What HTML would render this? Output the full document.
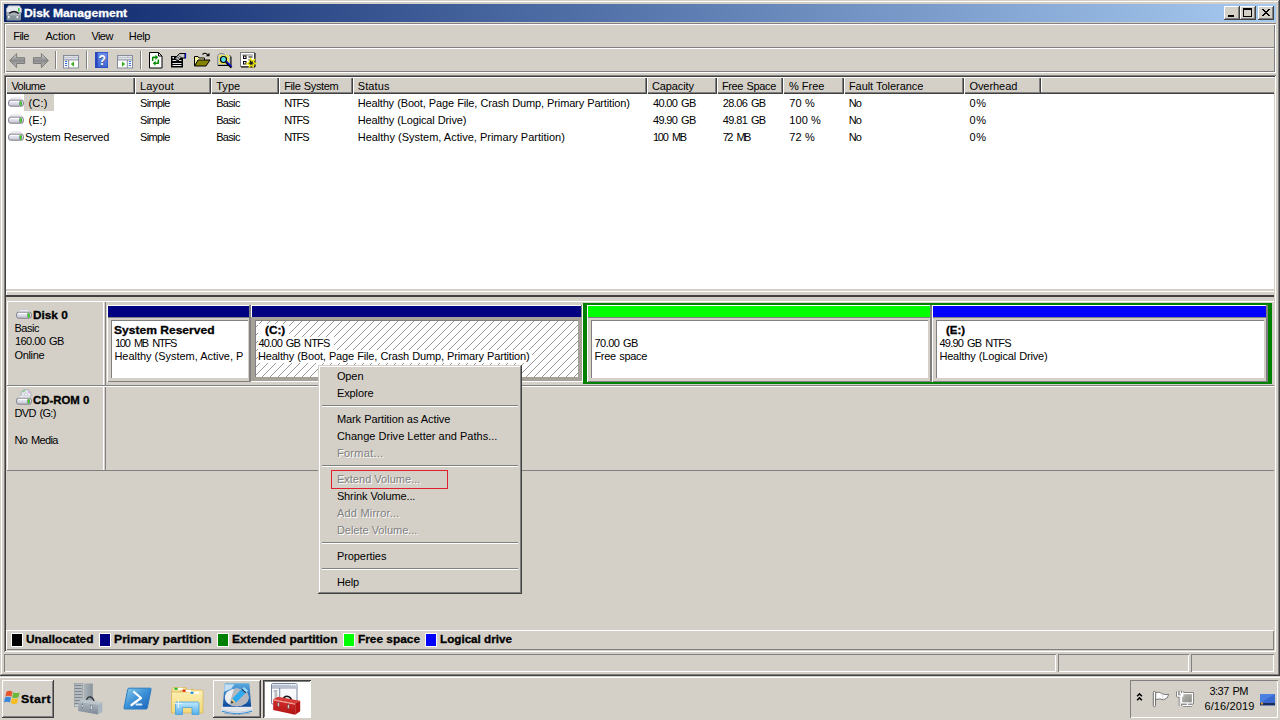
<!DOCTYPE html>
<html><head><meta charset="utf-8"><title>Disk Management</title>
<style>
*{box-sizing:border-box;margin:0;padding:0}
html,body{width:1280px;height:720px;overflow:hidden;background:#d4d0c8}
body{position:relative;font-family:"Liberation Sans",sans-serif;font-size:11px;line-height:13px;color:#000}
div,span,svg{position:absolute}
.t{white-space:pre;height:13px;transform-origin:0 0}
.b{font-weight:bold;-webkit-text-stroke:0.3px}
.d{color:#808080;text-shadow:1px 1px 0 #fff}
.win{left:0;top:0;width:1280px;height:676px;background:#d4d0c8;box-shadow:inset -1px -1px #404040,inset 1px 1px #d4d0c8,inset -2px -2px #808080,inset 2px 2px #fff}
.title{left:4px;top:4px;width:1272px;height:18px;background:linear-gradient(to right,#0a246a,#a6caf0)}
.btn{background:#d4d0c8;box-shadow:inset -1px -1px #404040,inset 1px 1px #fff,inset -2px -2px #808080,inset 2px 2px #d4d0c8}
.etch{left:4px;top:23px;width:1272px;height:50px;box-shadow:inset 1px 1px #808080,inset -1px -1px #fff,inset 2px 2px #fff,inset -2px -2px #808080}
.hl{height:1px;background:#808080}.wl{height:1px;background:#fff}
.vl{width:1px;background:#808080}.vw{width:1px;background:#fff}
.sunk2{box-shadow:inset 1px 1px #808080,inset -1px -1px #fff,inset 2px 2px #404040,inset -2px -2px #d4d0c8}
.sunk1{box-shadow:inset 1px 1px #808080,inset -1px -1px #fff}
.hc{top:77px;height:17px;background:#d4d0c8;box-shadow:inset 1px 1px #fff,inset -1px -1px #404040,inset -2px -2px #808080}
.pbox{background:#fff;box-shadow:inset 1px 1px #808080,inset -1px -1px #fff}
.lg{top:633px;width:12px;height:14px;border:1px solid #fff}
.menu{left:318px;top:365px;width:204px;height:229px;background:#d4d0c8;box-shadow:inset -1px -1px #404040,inset 1px 1px #d4d0c8,inset -2px -2px #808080,inset 2px 2px #fff}
.ms{left:322px;width:196px;height:2px;border-top:1px solid #808080;border-bottom:1px solid #fff}
</style></head><body>
<!-- ===== window ===== -->
<div class="win"></div>
<div class="title"></div>
<div class="btn" style="left:1224px;top:6px;width:16px;height:14px"></div>
<div class="btn" style="left:1240px;top:6px;width:16px;height:14px"></div>
<div class="btn" style="left:1258px;top:6px;width:16px;height:14px"></div>
<div style="left:1228px;top:15px;width:6px;height:2px;background:#000"></div>
<div style="left:1243px;top:8px;width:9px;height:9px;border:1px solid #000;border-top-width:2px"></div>
<svg style="left:1262px;top:9px" width="8" height="7" viewBox="0 0 8 7" shape-rendering="crispEdges"><path d="M0 0h2v1h1v1h2V1h1V0h2v1H7v1H6v1H5v1h1v1h1v1h1v1H6V6H5V5H3v1H2v1H0V6h1V5h1V4h1V3H2V2H1V1H0z" fill="#000"/></svg>
<div class="etch"></div>
<div class="hl" style="left:6px;top:47px;width:1268px"></div><div class="wl" style="left:6px;top:48px;width:1268px"></div>
<!-- toolbar separators -->
<div class="vl" style="left:55px;top:51px;height:18px"></div><div class="vw" style="left:56px;top:51px;height:18px"></div>
<div class="vl" style="left:86px;top:51px;height:18px"></div><div class="vw" style="left:87px;top:51px;height:18px"></div>
<div class="vl" style="left:140px;top:51px;height:18px"></div><div class="vw" style="left:141px;top:51px;height:18px"></div>
<!-- ===== list view ===== -->
<div class="sunk2" style="left:4px;top:75px;width:1272px;height:577px;background:#d4d0c8"></div>
<div style="left:6px;top:77px;width:1268px;height:212px;background:#fff"></div>
<div class="wl" style="left:6px;top:291px;width:1268px"></div>
<div style="left:6px;top:291px;width:1px;height:4px;background:#fff"></div>
<div style="left:6px;top:295px;width:1268px;height:2px;background:#404040"></div>
<div style="left:6px;top:77px;width:1268px;height:17px;background:#d4d0c8;box-shadow:inset 0 1px #fff,inset 0 -1px #404040,inset 0 -2px #808080"></div>
<div class="hc" style="left:6px;width:129px"></div>
<div class="hc" style="left:135px;width:76px"></div>
<div class="hc" style="left:211px;width:68px"></div>
<div class="hc" style="left:279px;width:74px"></div>
<div class="hc" style="left:353px;width:294px"></div>
<div class="hc" style="left:647px;width:70px"></div>
<div class="hc" style="left:717px;width:66px"></div>
<div class="hc" style="left:783px;width:61px"></div>
<div class="hc" style="left:844px;width:120px"></div>
<div class="hc" style="left:964px;width:77px"></div>
<div style="left:1041px;top:77px;width:1px;height:15px;background:#fff"></div>
<div style="left:24px;top:94px;width:30px;height:17px;background:#d4d0c8"></div>
<!-- ===== lower pane ===== -->
<!-- disk rows -->
<div class="wl" style="left:7px;top:301px;width:1267px"></div>
<div class="vw" style="left:7px;top:301px;height:169px"></div>
<div class="vw" style="left:103px;top:301px;height:169px"></div>
<div class="vl" style="left:105px;top:302px;height:168px"></div>
<div class="hl" style="left:7px;top:385px;width:1267px"></div>
<div class="wl" style="left:7px;top:386px;width:1267px"></div>
<div class="hl" style="left:7px;top:470px;width:1267px"></div>
<!-- partition: System Reserved -->
<div style="left:107px;top:305px;width:144px;height:77px;box-shadow:inset 1px 1px #fff,inset -1px -1px #808080"></div>
<div style="left:108px;top:306px;width:141px;height:11px;background:#000080"></div>
<div style="left:249px;top:305px;width:2px;height:77px;background:#808080"></div>
<div class="hl" style="left:108px;top:317px;width:141px"></div>
<div class="pbox" style="left:111px;top:320px;width:137px;height:58px"></div>
<!-- partition: C (selected) -->
<div style="left:251px;top:305px;width:1px;height:12px;background:#fff"></div>
<div style="left:251px;top:305px;width:330px;height:1px;background:#fff"></div>
<div style="left:252px;top:306px;width:329px;height:11px;background:#000080"></div>
<div style="left:581px;top:305px;width:1px;height:12px;background:#808080"></div>
<div style="left:251px;top:317px;width:331px;height:64px;background:#a5a198"></div>
<div id="hatch" style="left:255px;top:320px;width:323px;height:57px;background-color:#fff;box-shadow:inset 1px 1px #808080"></div>
<div style="left:582px;top:305px;width:1px;height:77px;background:#fff"></div>
<div class="wl" style="left:251px;top:381px;width:332px"></div>
<!-- extended frame -->
<div style="left:583px;top:303px;width:689px;height:81px;border:solid #008000;border-width:2px 4px 2px 4px"></div>
<!-- partition: free -->
<div style="left:587px;top:305px;width:345px;height:77px;box-shadow:inset 1px 1px #fff,inset 0 -1px #808080"></div>
<div style="left:588px;top:306px;width:342px;height:11px;background:#00ff00"></div>
<div style="left:930px;top:305px;width:2px;height:77px;background:#808080"></div>
<div class="hl" style="left:588px;top:317px;width:342px"></div>
<div class="pbox" style="left:591px;top:320px;width:337px;height:58px"></div>
<!-- partition: E -->
<div style="left:932px;top:305px;width:336px;height:77px;box-shadow:inset 1px 1px #fff,inset 0 -1px #808080"></div>
<div style="left:933px;top:306px;width:333px;height:11px;background:#0000ff"></div>
<div style="left:1266px;top:305px;width:2px;height:77px;background:#808080"></div>
<div class="hl" style="left:933px;top:317px;width:333px"></div>
<div class="pbox" style="left:936px;top:320px;width:328px;height:58px"></div>
<!-- legend -->
<div style="left:6px;top:630px;width:1268px;height:20px;box-shadow:inset 1px 1px #fff,inset -1px -1px #808080"></div>
<div class="lg" style="left:11px;background:#000"></div>
<div class="lg" style="left:99px;background:#000080"></div>
<div class="lg" style="left:217px;background:#008000"></div>
<div class="lg" style="left:343px;background:#00ff00"></div>
<div class="lg" style="left:425px;background:#0000ff"></div>
<!-- status bar -->
<div class="sunk1" style="left:4px;top:654px;width:1052px;height:18px"></div>
<div class="sunk1" style="left:1058px;top:654px;width:131px;height:18px"></div>
<div class="sunk1" style="left:1191px;top:654px;width:83px;height:18px"></div>
<svg width="0" height="0" style="left:0;top:0"><defs>
<linearGradient id="gArrow" x1="0" y1="0" x2="0" y2="1"><stop offset="0" stop-color="#dadada"/><stop offset="0.5" stop-color="#8a8a8a"/><stop offset="1" stop-color="#c4c4c4"/></linearGradient>
<linearGradient id="gDrive" x1="0" y1="0" x2="0" y2="1"><stop offset="0" stop-color="#f6f6fa"/><stop offset="0.5" stop-color="#dcdcea"/><stop offset="1" stop-color="#c4c4d0"/></linearGradient>
<linearGradient id="gHelp" x1="0" y1="0" x2="0" y2="1"><stop offset="0" stop-color="#6a8cea"/><stop offset="1" stop-color="#3e66d4"/></linearGradient>
<pattern id="hat" width="8" height="8" patternUnits="userSpaceOnUse"><path d="M5 0h1v1H5zM4 1h1v1H4zM3 2h1v1H3zM2 3h1v1H2zM1 4h1v1H1zM0 5h1v1H0zM7 6h1v1H7zM6 7h1v1H6z" fill="#989898" shape-rendering="crispEdges"/></pattern>

</defs></svg>
<!-- title icon -->
<svg style="left:6px;top:5px" width="16" height="16" viewBox="0 0 16 16">
<path d="M2.5 .8h11l2 3v3.6h-15V3.8z" fill="#e9ebf2" stroke="#a8acb8" stroke-width=".8"/>
<rect x="12" y="3.2" width="1.6" height="3.2" fill="#35c435"/>
<rect x=".5" y="8" width="14.5" height="7.6" rx="1" fill="#87939a"/>
<rect x=".5" y="8" width="14.5" height="2.4" fill="#a8b2b8"/>
<path d="M3.2 8.4Q8 4.6 12.6 8.4" stroke="#1a1a1a" stroke-width="1.3" fill="none"/>
<rect x="2" y="11" width="1.6" height="2.2" fill="#f0f0f0"/><rect x="10.6" y="11" width="1.6" height="2.2" fill="#f0f0f0"/>
</svg>
<!-- back / forward -->
<svg style="left:9px;top:53px" width="17" height="16" viewBox="0 0 17 16"><path d="M.6 7.5L7.6.6v4.1h8v5.8h-8v4.1z" fill="url(#gArrow)" stroke="#7c7c7c" stroke-width="1" stroke-linejoin="round"/></svg>
<svg style="left:32px;top:53px" width="17" height="16" viewBox="0 0 17 16"><path d="M16.4 7.5L9.4.6v4.1h-8v5.8h8v4.1z" fill="url(#gArrow)" stroke="#7c7c7c" stroke-width="1" stroke-linejoin="round"/></svg>
<!-- show/hide tree -->
<svg style="left:63px;top:55px" width="16" height="14" viewBox="0 0 16 14"><rect x=".5" y=".5" width="15" height="12.500" fill="#fff" stroke="#858c9c"/><rect x="1" y="1" width="14" height="4" fill="#b9bdc9"/><path d="M1.500 1.700h9" stroke="#f4f4f8" stroke-width=".9"/><path d="M1 3.700h14" stroke="#eceef4" stroke-width=".9"/><path d="M1 5h14" stroke="#858c9c" stroke-width=".8"/><rect x="11.500" y="1.100" width="1.200" height="1.200" fill="#fff"/><rect x="13.500" y="1.100" width="1.200" height="1.200" fill="#fff"/><path d="M5.700 5v8" stroke="#858c9c"/><path d="M2 6.500h2.200M2 8.500h2.200M2 10.500h2.200" stroke="#2f6fe0" stroke-width="1"/><path d="M11 6.500v5.200L7.800 9.100z" fill="#3cb21e"/></svg>
<!-- help -->
<svg style="left:95px;top:52px" width="13" height="16" viewBox="0 0 13 16"><rect width="13" height="16" fill="#2a48be"/><rect x="2.800" y=".8" width="9.700" height="14.400" fill="url(#gHelp)"/><text x="7.700" y="14" text-anchor="middle" font-family="Liberation Sans,sans-serif" font-size="15" font-weight="bold" fill="#5a6890" transform="translate(1.500,0) scale(.8,1)">?</text><text x="7.200" y="13.500" text-anchor="middle" font-family="Liberation Sans,sans-serif" font-size="15" font-weight="bold" fill="#fff" transform="translate(1.500,0) scale(.8,1)">?</text></svg>
<!-- action pane -->
<svg style="left:117px;top:55px" width="16" height="14" viewBox="0 0 16 14"><rect x=".5" y=".5" width="15" height="12.500" fill="#fff" stroke="#858c9c"/><rect x="1" y="1" width="14" height="4" fill="#b9bdc9"/><path d="M1.500 1.700h9" stroke="#f4f4f8" stroke-width=".9"/><path d="M1 3.700h14" stroke="#eceef4" stroke-width=".9"/><path d="M1 5h14" stroke="#858c9c" stroke-width=".8"/><rect x="11.500" y="1.100" width="1.200" height="1.200" fill="#fff"/><rect x="13.500" y="1.100" width="1.200" height="1.200" fill="#fff"/><path d="M10.300 5v8" stroke="#858c9c"/><path d="M11.800 6.500h2.200M11.800 8.500h2.200M11.800 10.500h2.200" stroke="#2f6fe0" stroke-width="1"/><path d="M5 6.500v5.200l3.200-2.600z" fill="#3cb21e"/></svg>
<!-- refresh -->
<svg style="left:149px;top:52px" width="14" height="17" viewBox="0 0 14 17"><path d="M.5.5h9l3.500 3.500v12h-12.500z" fill="#fff" stroke="#000"/><path d="M9.500 .5v3.500h3.500" fill="none" stroke="#000"/><path d="M9.200 5.300L6.500 2.800v1.700H4.200q-1.300 0-1.300 1.300V9h1.500V6.200h2.100v1.700zM3.800 11.300l2.700 2.500v-1.700h2.300q1.300 0 1.300-1.300V7.600H8.600v2.800H6.500V8.700z" fill="#008a00"/></svg>
<!-- properties -->
<svg style="left:171px;top:52px" width="16" height="16" viewBox="0 0 16 16"><rect x="0" y="4" width="12" height="11.500" fill="#000"/><rect x="1.500" y="5" width="1.500" height="1.500" fill="#fff"/><path d="M1.500 8.500h9M1.500 11.500h9M1.500 13.500h9" stroke="#e8e8e8" stroke-width="1"/><path d="M3.500 7L8.500 1.500h5.500v4.500h-4L7 9z" fill="#c8c8c8" stroke="#000" stroke-width="1"/><path d="M5 6.500l3 3M6.500 5l3 3M8 3.500l2.500 2.500" stroke="#000" stroke-width=".8"/><path d="M14.500 1v5.500" stroke="#0000c0" stroke-width="1.200"/></svg>
<!-- open folder -->
<svg style="left:194px;top:52px" width="17" height="15" viewBox="0 0 17 15"><path d="M.5 14V4.500h3.500l1 1.500h5.500v2" fill="#f8f4a0" stroke="#000"/><path d="M.500 14l3.500-6h12l-4 6z" fill="#848200" stroke="#000"/><path d="M8.500 2.500q3-3 5.500 1" fill="none" stroke="#000" stroke-width="1.100"/><path d="M11.800 4.200h3.700V.8z" fill="#000"/></svg>
<!-- find -->
<svg style="left:217px;top:53px" width="16" height="16" viewBox="0 0 16 16"><pattern id="dth" width="2" height="2" patternUnits="userSpaceOnUse"><rect width="2" height="2" fill="#c4c4c0"/><rect width="1" height="1" fill="#ffff00"/><rect x="1" y="1" width="1" height="1" fill="#ffff00"/></pattern><path d="M.5 2.500L2.500.5h4l1.500 2h5.500v9.500h-13z" fill="#c4c4c0" stroke="#909090"/><rect x="2" y="2" width="10" height="9" fill="url(#dth)"/><path d="M1 12.500h13v-9" fill="none" stroke="#000"/><circle cx="6.500" cy="6.500" r="3" fill="#58e4ec" stroke="#000" stroke-width="1.200"/><path d="M9 9l5.500 5.500" stroke="#000" stroke-width="2.400"/><path d="M9.500 8.500l5 5" stroke="#0000f0" stroke-width="1.300"/></svg>
<!-- settings -->
<svg style="left:240px;top:52px" width="17" height="16" viewBox="0 0 17 16"><rect x=".5" y=".5" width="14" height="14" fill="#fff" stroke="#808080"/><path d="M1 15h14V1" fill="none" stroke="#000"/><rect x="2" y="2" width="11" height="2" fill="#c0c0c0"/><rect x="3" y="3.500" width="3.500" height="3.500" fill="#000"/><rect x="4" y="4.500" width="1.500" height="1.500" fill="#fff"/><rect x="3" y="9" width="3.500" height="3.500" fill="#000"/><rect x="4" y="10" width="1.500" height="1.500" fill="#fff"/><path d="M8.500 5h4M8.500 8h2" stroke="#000" stroke-width="1.200"/><path d="M10.700 6.500l1.200 2.500 2.600-1.400-1.200 2.600 2.600 1.400-2.900.5.400 2.800-2.300-1.900-1.900 2.200.2-2.900-2.900-.4 2.500-1.500z" fill="#202020" stroke="#f4ec00" stroke-width="1.100"/></svg>
<!-- list drive icons -->
<svg style="left:8px;top:97px" width="16" height="11" viewBox="0 0 16 11"><path d="M4 .9h8.200l2.600 2.400H1.200z" fill="#f1f1f5" stroke="#c9c9d2" stroke-width=".6"/><rect x=".6" y="3.200" width="14.800" height="6" rx="2" fill="url(#gDrive)" stroke="#7e7e88" stroke-width="1"/><path d="M2.500 4.400h9" stroke="#fff" stroke-width="1"/><rect x="11.300" y="4.200" width="2.600" height="4.200" rx=".8" fill="#6c6484"/><rect x="11.800" y="4.200" width="1.600" height="4.200" fill="#3fe01c"/></svg>
<svg style="left:8px;top:114px" width="16" height="11" viewBox="0 0 16 11"><path d="M4 .9h8.200l2.600 2.400H1.200z" fill="#f1f1f5" stroke="#c9c9d2" stroke-width=".6"/><rect x=".6" y="3.200" width="14.800" height="6" rx="2" fill="url(#gDrive)" stroke="#7e7e88" stroke-width="1"/><path d="M2.500 4.400h9" stroke="#fff" stroke-width="1"/><rect x="11.300" y="4.200" width="2.600" height="4.200" rx=".8" fill="#6c6484"/><rect x="11.800" y="4.200" width="1.600" height="4.200" fill="#3fe01c"/></svg>
<svg style="left:8px;top:131px" width="16" height="11" viewBox="0 0 16 11"><path d="M4 .9h8.200l2.600 2.400H1.200z" fill="#f1f1f5" stroke="#c9c9d2" stroke-width=".6"/><rect x=".6" y="3.200" width="14.800" height="6" rx="2" fill="url(#gDrive)" stroke="#7e7e88" stroke-width="1"/><path d="M2.500 4.400h9" stroke="#fff" stroke-width="1"/><rect x="11.300" y="4.200" width="2.600" height="4.200" rx=".8" fill="#6c6484"/><rect x="11.800" y="4.200" width="1.600" height="4.200" fill="#3fe01c"/></svg>
<!-- disk 0 icon -->
<svg style="left:16px;top:309px" width="16" height="11" viewBox="0 0 16 11"><path d="M4 .9h8.200l2.600 2.400H1.200z" fill="#f1f1f5" stroke="#c9c9d2" stroke-width=".6"/><rect x=".6" y="3.200" width="14.800" height="6" rx="2" fill="url(#gDrive)" stroke="#7e7e88" stroke-width="1"/><path d="M2.500 4.400h9" stroke="#fff" stroke-width="1"/><rect x="11.300" y="4.200" width="2.600" height="4.200" rx=".8" fill="#6c6484"/><rect x="11.800" y="4.200" width="1.600" height="4.200" fill="#3fe01c"/></svg>
<!-- cd-rom icon -->
<svg style="left:16px;top:389px" width="17" height="17" viewBox="0 0 17 17"><circle cx="10" cy="5.500" r="5" fill="#e4e8ee" stroke="#a0a6b0" stroke-width=".8"/><circle cx="10" cy="5.500" r="1.500" fill="#fff" stroke="#a0a6b0" stroke-width=".6"/><path d="M7 3l2-1.500" stroke="#6ad06a" stroke-width="1.200"/><path d="M12.500 2.500l1 1.500" stroke="#e070e0" stroke-width="1"/><g transform="translate(0,6)"><path d="M4 .9h8.200l2.600 2.400H1.200z" fill="#f1f1f5" stroke="#c9c9d2" stroke-width=".6"/><rect x=".6" y="3.200" width="14.800" height="6" rx="2" fill="url(#gDrive)" stroke="#7e7e88" stroke-width="1"/><path d="M2.500 4.400h9" stroke="#fff" stroke-width="1"/><rect x="11.300" y="4.200" width="2.600" height="4.200" rx=".8" fill="#6c6484"/><rect x="11.800" y="4.200" width="1.600" height="4.200" fill="#3fe01c"/></g></svg>
<!-- hatch -->
<svg style="left:256px;top:321px" width="322" height="56"><rect width="322" height="56" fill="url(#hat)"/></svg>

<div style="left:258px;top:324px;width:31px;height:13px;background:#fff"></div>
<div style="left:258px;top:337px;width:76px;height:13px;background:#fff"></div>
<div style="left:258px;top:350px;width:274px;height:13px;background:#fff"></div>
<!-- ===== context menu ===== -->
<div class="menu"></div>
<div class="ms" style="top:405px"></div>
<div class="ms" style="top:465px"></div>
<div class="ms" style="top:542px"></div>
<div class="ms" style="top:568px"></div>
<div style="left:331px;top:470px;width:117px;height:19px;border:1px solid #e0202c"></div>
<!-- ===== taskbar ===== -->
<div style="left:0;top:676px;width:1280px;height:44px;background:#d4d0c8"></div>
<div class="wl" style="left:0;top:677px;width:1280px"></div>
<div class="btn" style="left:2px;top:680px;width:52px;height:38px"></div>
<div class="btn" style="left:213px;top:680px;width:48px;height:38px"></div>
<div style="left:263px;top:680px;width:48px;height:38px;background:#fff;box-shadow:inset 1px 1px #404040,inset -1px -1px #fff,inset 2px 2px #808080"></div>
<div class="sunk1" style="left:1130px;top:680px;width:148px;height:38px"></div>
<svg width="0" height="0" style="left:0;top:0"><defs>
<linearGradient id="gSrv" x1="0" y1="0" x2="1" y2="0"><stop offset="0" stop-color="#aeb6bc"/><stop offset="1" stop-color="#8a949c"/></linearGradient>
<linearGradient id="gBox" x1="0" y1="0" x2="0" y2="1"><stop offset="0" stop-color="#b0bac2"/><stop offset="1" stop-color="#7d8a96"/></linearGradient>
<linearGradient id="gPS" x1="0" y1="0" x2="1" y2="1"><stop offset="0" stop-color="#8ed0ee"/><stop offset="0.5" stop-color="#3a8fd6"/><stop offset="1" stop-color="#1c62b8"/></linearGradient>
<linearGradient id="gFold" x1="0" y1="0" x2="0" y2="1"><stop offset="0" stop-color="#fdf0b4"/><stop offset="1" stop-color="#f2d878"/></linearGradient>
<linearGradient id="gStand" x1="0" y1="0" x2="0" y2="1"><stop offset="0" stop-color="#bfe8fb"/><stop offset="1" stop-color="#56aeea"/></linearGradient>
<linearGradient id="gPW" x1="0" y1="0" x2="0" y2="1"><stop offset="0" stop-color="#5aa8e0"/><stop offset="1" stop-color="#0c4a9c"/></linearGradient>
<linearGradient id="gRed" x1="0" y1="0" x2="0" y2="1"><stop offset="0" stop-color="#d63030"/><stop offset="1" stop-color="#b01414"/></linearGradient>
<linearGradient id="gScr" x1="0" y1="0" x2="1" y2="1"><stop offset="0" stop-color="#b8b8b2"/><stop offset="1" stop-color="#8c8c86"/></linearGradient>
</defs></svg>
<!-- start flag -->
<svg style="left:4px;top:690px" width="17" height="16" viewBox="0 0 17 16">
<path d="M2.500 1.500Q5.500 -.3 8.500 1.700L7.300 6.700Q4.500 5 1.300 6.700z" fill="#e8542c"/>
<path d="M9.300 2.200Q12.500 4 15.800 2.200L14.500 7.300Q11.300 9 8.100 7.200z" fill="#6cb83a"/>
<path d="M1.100 7.600Q4.200 5.900 7.100 7.600L5.900 12.600Q3 11 -.1 12.600z" fill="#3a86d8"/>
<path d="M7.900 8.100Q11 9.900 14.300 8.200L13.100 13.200Q9.900 15 6.700 13.100z" fill="#f6be20"/>
</svg>
<!-- server manager -->
<svg style="left:74px;top:683px" width="29" height="32" viewBox="0 0 29 32">
<rect x=".3" y=".3" width="8" height="23.500" fill="#c9cfd3" stroke="#8a929a" stroke-width=".6"/>
<path d="M.8 2.500h7M.8 5.500h7M.8 8.500h7M.8 11.500h7M.8 14.500h7M.8 17.500h7M.8 20.500h7" stroke="#7c858c" stroke-width="1.300"/>
<rect x="9.500" y=".5" width="9.300" height="17" fill="url(#gSrv)"/>
<path d="M12.200 18Q13.500 13.200 16.500 14T20.300 19.500" fill="none" stroke="#2c3438" stroke-width="1.300"/>
<path d="M4.300 18.500l19.700 3v10l-19.700-3.500z" fill="url(#gBox)"/>
<path d="M24 21.500l4.300-2.300v9.800l-4.300 2.500z" fill="#a9b5c0"/>
<path d="M4.300 18.500l4-2.300 20 3-4.300 2.300z" fill="#bcc5cc"/>
<rect x="8" y="21" width="1.600" height="3.800" fill="#e8ecee" stroke="#5a646c" stroke-width=".4"/><rect x="16.500" y="22.500" width="1.600" height="3.800" fill="#e8ecee" stroke="#5a646c" stroke-width=".4"/>
</svg>
<!-- powershell -->
<svg style="left:122px;top:687px" width="30" height="24" viewBox="0 0 30 24">
<path d="M7 1.200h21.300q1 0 .8 1L25.300 21q-.2 1-1.200 1H2.800q-1 0-.8-1L5.800 2.200q.2-1 1.200-1z" fill="url(#gPS)" stroke="#2a7cc0" stroke-width="1"/>
<path d="M12 5l7 6-9.500 7" fill="none" stroke="#fff" stroke-width="2.200" stroke-linejoin="round" stroke-linecap="round"/>
<path d="M14.500 17.500h5" stroke="#d8ecf8" stroke-width="1.800" stroke-linecap="round"/>
</svg>
<!-- explorer -->
<svg style="left:171px;top:686px" width="33" height="30" viewBox="0 0 33 30">
<path d="M2 1.500h13l1 2v3H1V2.500z" fill="#f6e096" stroke="#d8b658" stroke-width=".7"/>
<path d="M10 3.500h13l1 2v3H9z" fill="#f6e096" stroke="#d8b658" stroke-width=".7"/>
<path d="M.5 6h17l1.500-2h12l1 1.500V27H.5z" fill="url(#gFold)" stroke="#d8b658" stroke-width=".8"/>
<rect x="3.500" y="1.800" width="3" height="2" fill="#18c030"/><rect x="7" y="1.800" width="5" height="2" fill="#fff"/>
<rect x="11.500" y="3.800" width="3" height="2" fill="#e02818"/><rect x="15" y="3.800" width="5" height="2" fill="#fff"/>
<rect x="19.500" y="5.800" width="3" height="2" fill="#1890e8"/><rect x="23" y="5.800" width="5" height="2" fill="#fff"/>
<path d="M4.500 17.500q0-1.500 1.500-1.500h20.500q1.500 0 1.500 1.500V28.500h-7V21.500h-9.500v7h-7z" fill="url(#gStand)" stroke="#469fdf" stroke-width=".8"/>
<path d="M7.500 13v9M3.500 17.500h8" stroke="#fff" stroke-width=".8" opacity=".9"/>
</svg>
<!-- partition tool -->
<svg style="left:221px;top:683px" width="32" height="32" viewBox="0 0 32 32">
<path d="M.3 25q0-2 2-2.500h27.400q2 .5 2 2.500v2.500q-2 4.200-15.700 4.200T.3 27.500z" fill="#e4e7eb"/>
<path d="M3.500 1.500q0-1.200 1.200-1.200h22.600q1.200 0 1.200 1.200L30.200 23.700H1.800z" fill="url(#gPW)"/>
<path d="M3.800 1.200h9.500l-3 4.500-7.200 3z" fill="#c4def2"/>
<ellipse cx="15.700" cy="14.400" rx="11.800" ry="8.900" fill="#eceef2"/>
<clipPath id="cpD"><ellipse cx="15.700" cy="14.400" rx="11.800" ry="8.900"/></clipPath><path d="M13.500 4L32 4V26H7z" fill="#b4b7be" clip-path="url(#cpD)"/>
<path d="M9.800 20.300l1.600-4.800L20.200 6.600l4.200 3.600-9.500 9.500z" fill="#2caaf0"/>
<path d="M20.200 6.600l1-1 4.200 3.600-1 1z" fill="#1c3c64"/>
<path d="M21.200 5.600l1.600-1.700 4.300 3.600-1.700 1.700z" fill="#9adcfa"/>
<path d="M9.800 20.300l1.600-4.800 3.500 4.200z" fill="#ecc878"/><path d="M9.800 20.300l.9-2.700 2 2.300z" fill="#2c3440"/>
<path d="M.8 26.800q15.200 4.600 30.400 0" fill="none" stroke="#c2c8d0" stroke-width=".8"/>
<path d="M1 28.300q15 4.800 30 0" fill="none" stroke="#2e90dc" stroke-width="1.100"/>
<path d="M3 30.300q13 3 26 0" fill="none" stroke="#9aa2ac" stroke-width=".9"/>
</svg>
<!-- mmc toolbox -->
<svg style="left:270px;top:682px" width="34" height="34" viewBox="0 0 34 34">
<rect x="1.500" y="1.500" width="25.500" height="20.500" rx="1.200" fill="#f7f9fb" stroke="#76849e" stroke-width="1"/>
<rect x="2" y="2" width="24.500" height="4" fill="#e3e8f0"/><path d="M2 4h24.500M2 6h24.500" stroke="#76849e" stroke-width=".8"/>
<rect x="20.800" y="2.300" width="1.200" height="1.200" fill="#fff"/><rect x="22.900" y="2.300" width="1.200" height="1.200" fill="#fff"/><rect x="25" y="2.300" width="1.200" height="1.200" fill="#fff"/>
<path d="M9.700 6v16" stroke="#76849e" stroke-width="1"/>
<path d="M3.500 9h4M4.500 11h2.500M4.500 13h3M4.500 15h2" stroke="#606870" stroke-width=".8"/>
<path d="M13 17.500Q14.500 13.500 18 14.500T22 20" fill="none" stroke="#181818" stroke-width="1.600"/>
<path d="M3.200 17.200l22 4.300v11.200l-22-4.700z" fill="url(#gRed)"/>
<path d="M25.200 21.500l5-2.700v10.500l-5 3.400z" fill="#b41414"/>
<path d="M3.200 17.200l4.500-2.500 22.500 4.100-5 2.700z" fill="#d63a34"/>
<path d="M3.500 18l21.500 4.200" stroke="#f4b0a0" stroke-width="1"/>
<rect x="7.500" y="20.500" width="1.800" height="4" fill="#cdd2d6" stroke="#6a2020" stroke-width=".4"/><rect x="17.500" y="22.500" width="1.800" height="4" fill="#cdd2d6" stroke="#6a2020" stroke-width=".4"/>
</svg>
<!-- tray chevron -->
<svg style="left:1136px;top:692px" width="8" height="10" viewBox="0 0 8 10"><path d="M1.100 4.300L3.500 1.900 5.900 4.300M1.100 8.300L3.500 5.900 5.900 8.300" fill="none" stroke="#000" stroke-width="1.500"/></svg>
<!-- tray flag -->
<svg style="left:1152px;top:690px" width="19" height="18" viewBox="0 0 19 18"><rect x="1.300" y="1.400" width="2.200" height="15.300" rx="1" fill="#fff" stroke="#707070" stroke-width="1"/><path d="M3.700 2.600Q7 1.400 9.500 3.300T16.800 4.300Q16 8.800 11.800 9.800 8 8.300 3.700 9.500z" fill="#fcfcfc" stroke="#787878" stroke-width="1"/><path d="M9.500 3.300Q10.300 6.500 11.800 9.800" stroke="#c4c4c4" stroke-width=".7" fill="none"/></svg>
<!-- tray network -->
<svg style="left:1176px;top:690px" width="18" height="17" viewBox="0 0 18 17"><g fill="none" stroke="#6c6c6c" stroke-width="2.900" stroke-linejoin="round"><rect x="5.500" y="3.500" width="11" height="9.500"/><path d="M7 15.500h9M11.500 13v2.500M1.700 1.500v4.500h5V1.500M4.200 .8v4M4.200 6v10"/></g><rect x="5.500" y="3.500" width="11" height="9.500" fill="url(#gScr)" stroke="#fff" stroke-width="1.300"/><path d="M7 15.500h9M11.500 13v2.500" stroke="#fff" stroke-width="1.300"/><path d="M1.700 1.500v4.500h5V1.500M4.200 .8v4" fill="none" stroke="#fff" stroke-width="1.300"/><path d="M4.200 6v10" stroke="#fff" stroke-width="1.300"/></svg>
<!-- show desktop -->
<svg style="left:1260px;top:694px" width="15" height="12" viewBox="0 0 15 12"><rect width="15" height="12" fill="#3a6ad0"/><path d="M0 0h15L0 9z" fill="#4c80e0"/><rect y="9" width="15" height="2.200" fill="#1c2c58"/><rect x="1" y="8.500" width="2" height="2" fill="#e8a030"/><rect y="11.200" width="15" height=".8" fill="#8090b0"/></svg>

<span class="t b" style="left:23.8px;top:6.7px;transform:scaleX(1.1023);color:#fff">Disk Management</span>
<span class="t" style="left:13.2px;top:29.7px;letter-spacing:-0.511px">File</span>
<span class="t" style="left:45.4px;top:29.7px;letter-spacing:-0.116px">Action</span>
<span class="t" style="left:91.4px;top:29.7px;letter-spacing:-0.552px">View</span>
<span class="t" style="left:128.8px;top:29.7px;letter-spacing:-0.342px">Help</span>
<span class="t" style="left:11.4px;top:79.7px;letter-spacing:-0.501px">Volume</span>
<span class="t" style="left:140.1px;top:79.7px;letter-spacing:0.114px">Layout</span>
<span class="t" style="left:216.2px;top:79.7px;letter-spacing:0.047px">Type</span>
<span class="t" style="left:284.2px;top:79.7px;letter-spacing:-0.384px;word-spacing:0.767px">File System</span>
<span class="t" style="left:357.7px;top:79.7px;letter-spacing:0.142px">Status</span>
<span class="t" style="left:651.9px;top:79.7px;letter-spacing:-0.085px">Capacity</span>
<span class="t" style="left:721.9px;top:79.7px;letter-spacing:-0.339px;word-spacing:0.679px">Free Space</span>
<span class="t" style="left:788.9px;top:79.7px;letter-spacing:0.006px">% Free</span>
<span class="t" style="left:848.9px;top:79.7px;letter-spacing:-0.043px;word-spacing:0.086px">Fault Tolerance</span>
<span class="t" style="left:969.4px;top:79.7px;letter-spacing:-0.045px">Overhead</span>
<span class="t" style="left:28.4px;top:96.7px;letter-spacing:0.224px">(C:)</span>
<span class="t" style="left:140.1px;top:96.7px;letter-spacing:-0.685px">Simple</span>
<span class="t" style="left:216.2px;top:96.7px;letter-spacing:-0.677px">Basic</span>
<span class="t" style="left:284.2px;top:96.7px;letter-spacing:-1.145px">NTFS</span>
<span class="t" style="left:357.7px;top:96.7px;letter-spacing:-0.145px;word-spacing:0.291px">Healthy (Boot, Page File, Crash Dump, Primary Partition)</span>
<span class="t" style="left:652.9px;top:96.7px;letter-spacing:-0.617px;word-spacing:1.234px">40.00 GB</span>
<span class="t" style="left:722.8px;top:96.7px;letter-spacing:-0.617px;word-spacing:1.234px">28.06 GB</span>
<span class="t" style="left:789.3px;top:96.7px;letter-spacing:0.174px">70 %</span>
<span class="t" style="left:848.8px;top:96.7px;letter-spacing:-0.962px">No</span>
<span class="t" style="left:969.4px;top:96.7px;letter-spacing:0.694px">0%</span>
<span class="t" style="left:28.4px;top:113.7px;letter-spacing:0.089px">(E:)</span>
<span class="t" style="left:140.1px;top:113.7px;letter-spacing:-0.685px">Simple</span>
<span class="t" style="left:216.2px;top:113.7px;letter-spacing:-0.677px">Basic</span>
<span class="t" style="left:284.2px;top:113.7px;letter-spacing:-1.145px">NTFS</span>
<span class="t" style="left:357.7px;top:113.7px;letter-spacing:-0.143px;word-spacing:0.285px">Healthy (Logical Drive)</span>
<span class="t" style="left:652.9px;top:113.7px;letter-spacing:-0.617px;word-spacing:1.234px">49.90 GB</span>
<span class="t" style="left:722.8px;top:113.7px;letter-spacing:-0.617px;word-spacing:1.234px">49.81 GB</span>
<span class="t" style="left:789.3px;top:113.7px;letter-spacing:0.099px">100 %</span>
<span class="t" style="left:848.8px;top:113.7px;letter-spacing:-0.962px">No</span>
<span class="t" style="left:969.4px;top:113.7px;letter-spacing:0.694px">0%</span>
<span class="t" style="left:24.9px;top:130.7px;letter-spacing:-0.193px;word-spacing:0.385px">System Reserved</span>
<span class="t" style="left:140.1px;top:130.7px;letter-spacing:-0.685px">Simple</span>
<span class="t" style="left:216.2px;top:130.7px;letter-spacing:-0.677px">Basic</span>
<span class="t" style="left:284.2px;top:130.7px;letter-spacing:-1.145px">NTFS</span>
<span class="t" style="left:357.7px;top:130.7px;letter-spacing:-0.001px;word-spacing:0.002px">Healthy (System, Active, Primary Partition)</span>
<span class="t" style="left:652.9px;top:130.7px;letter-spacing:-1.207px;word-spacing:2.415px">100 MB</span>
<span class="t" style="left:722.8px;top:130.7px;letter-spacing:-1.648px;word-spacing:3.297px">72 MB</span>
<span class="t" style="left:789.3px;top:130.7px;letter-spacing:0.174px">72 %</span>
<span class="t" style="left:848.8px;top:130.7px;letter-spacing:-0.962px">No</span>
<span class="t" style="left:969.4px;top:130.7px;letter-spacing:0.694px">0%</span>
<span class="t b" style="left:32.7px;top:308.7px;transform:scaleX(1.0703)">Disk 0</span>
<span class="t" style="left:14.4px;top:321.7px;letter-spacing:-0.477px">Basic</span>
<span class="t" style="left:14.9px;top:334.7px;letter-spacing:-0.516px;word-spacing:1.031px">160.00 GB</span>
<span class="t" style="left:14.4px;top:348.7px;letter-spacing:-0.319px">Online</span>
<span class="t b" style="left:32.7px;top:393.7px;transform:scaleX(1.0333)">CD-ROM 0</span>
<span class="t" style="left:14.4px;top:406.7px;letter-spacing:-0.647px;word-spacing:1.294px">DVD (G:)</span>
<span class="t" style="left:14.4px;top:433.7px;letter-spacing:-0.616px;word-spacing:1.231px">No Media</span>
<span class="t b" style="left:114.4px;top:323.7px;transform:scaleX(1.0956)">System Reserved</span>
<span class="t" style="left:114.9px;top:336.7px;letter-spacing:-1.198px;word-spacing:2.396px">100 MB NTFS</span>
<span class="t" style="left:114.4px;top:349.7px;letter-spacing:-0.032px;word-spacing:0.064px">Healthy (System, Active, P</span>
<span class="t b" style="left:264.9px;top:323.7px;transform:scaleX(1.0719)">(C:)</span>
<span class="t" style="left:258.4px;top:336.7px;letter-spacing:-0.783px;word-spacing:1.566px">40.00 GB NTFS</span>
<span class="t" style="left:257.9px;top:349.7px;letter-spacing:-0.157px;word-spacing:0.315px">Healthy (Boot, Page File, Crash Dump, Primary Partition)</span>
<span class="t" style="left:594.4px;top:336.7px;letter-spacing:-0.497px;word-spacing:0.994px">70.00 GB</span>
<span class="t" style="left:594.4px;top:349.7px;letter-spacing:-0.290px;word-spacing:0.580px">Free space</span>
<span class="t b" style="left:945.7px;top:323.7px;transform:scaleX(1.0421)">(E:)</span>
<span class="t" style="left:939.4px;top:336.7px;letter-spacing:-0.746px;word-spacing:1.491px">49.90 GB NTFS</span>
<span class="t" style="left:939.4px;top:349.7px;letter-spacing:-0.165px;word-spacing:0.330px">Healthy (Logical Drive)</span>
<span class="t" style="left:336.9px;top:369.7px;letter-spacing:-0.100px;word-spacing:0.200px">Open</span>
<span class="t" style="left:336.9px;top:386.7px;letter-spacing:-0.100px;word-spacing:0.200px">Explore</span>
<span class="t" style="left:336.9px;top:412.7px;letter-spacing:-0.085px;word-spacing:0.169px">Mark Partition as Active</span>
<span class="t" style="left:336.9px;top:429.7px;letter-spacing:0.009px">Change Drive Letter and Paths...</span>
<span class="t d" style="left:336.9px;top:446.7px;letter-spacing:0.311px">Format...</span>
<span class="t d" style="left:336.9px;top:472.7px;letter-spacing:0.022px">Extend Volume...</span>
<span class="t" style="left:336.9px;top:489.7px;letter-spacing:-0.123px;word-spacing:0.245px">Shrink Volume...</span>
<span class="t d" style="left:336.9px;top:506.7px;letter-spacing:0.216px">Add Mirror...</span>
<span class="t d" style="left:336.9px;top:523.7px;letter-spacing:-0.017px;word-spacing:0.034px">Delete Volume...</span>
<span class="t" style="left:336.9px;top:549.7px;letter-spacing:-0.071px">Properties</span>
<span class="t" style="left:336.9px;top:575.7px;letter-spacing:-0.100px;word-spacing:0.200px">Help</span>
<span class="t b" style="left:26.4px;top:632.7px;transform:scaleX(1.0824)">Unallocated</span>
<span class="t b" style="left:114.4px;top:632.7px;transform:scaleX(1.1076)">Primary partition</span>
<span class="t b" style="left:232.4px;top:632.7px;transform:scaleX(1.0926)">Extended partition</span>
<span class="t b" style="left:358.4px;top:632.7px;transform:scaleX(1.0786)">Free space</span>
<span class="t b" style="left:440.4px;top:632.7px;transform:scaleX(1.0610)">Logical drive</span>
<span class="t b" style="left:20.9px;top:692.7px;letter-spacing:0.319px;transform:scaleX(1.1200)">Start</span>
<span class="t" style="left:1209.4px;top:684.7px;letter-spacing:-0.492px;word-spacing:0.984px">3:37 PM</span>
<span class="t" style="left:1204.4px;top:699.7px;letter-spacing:0.133px">6/16/2019</span>
</body></html>
